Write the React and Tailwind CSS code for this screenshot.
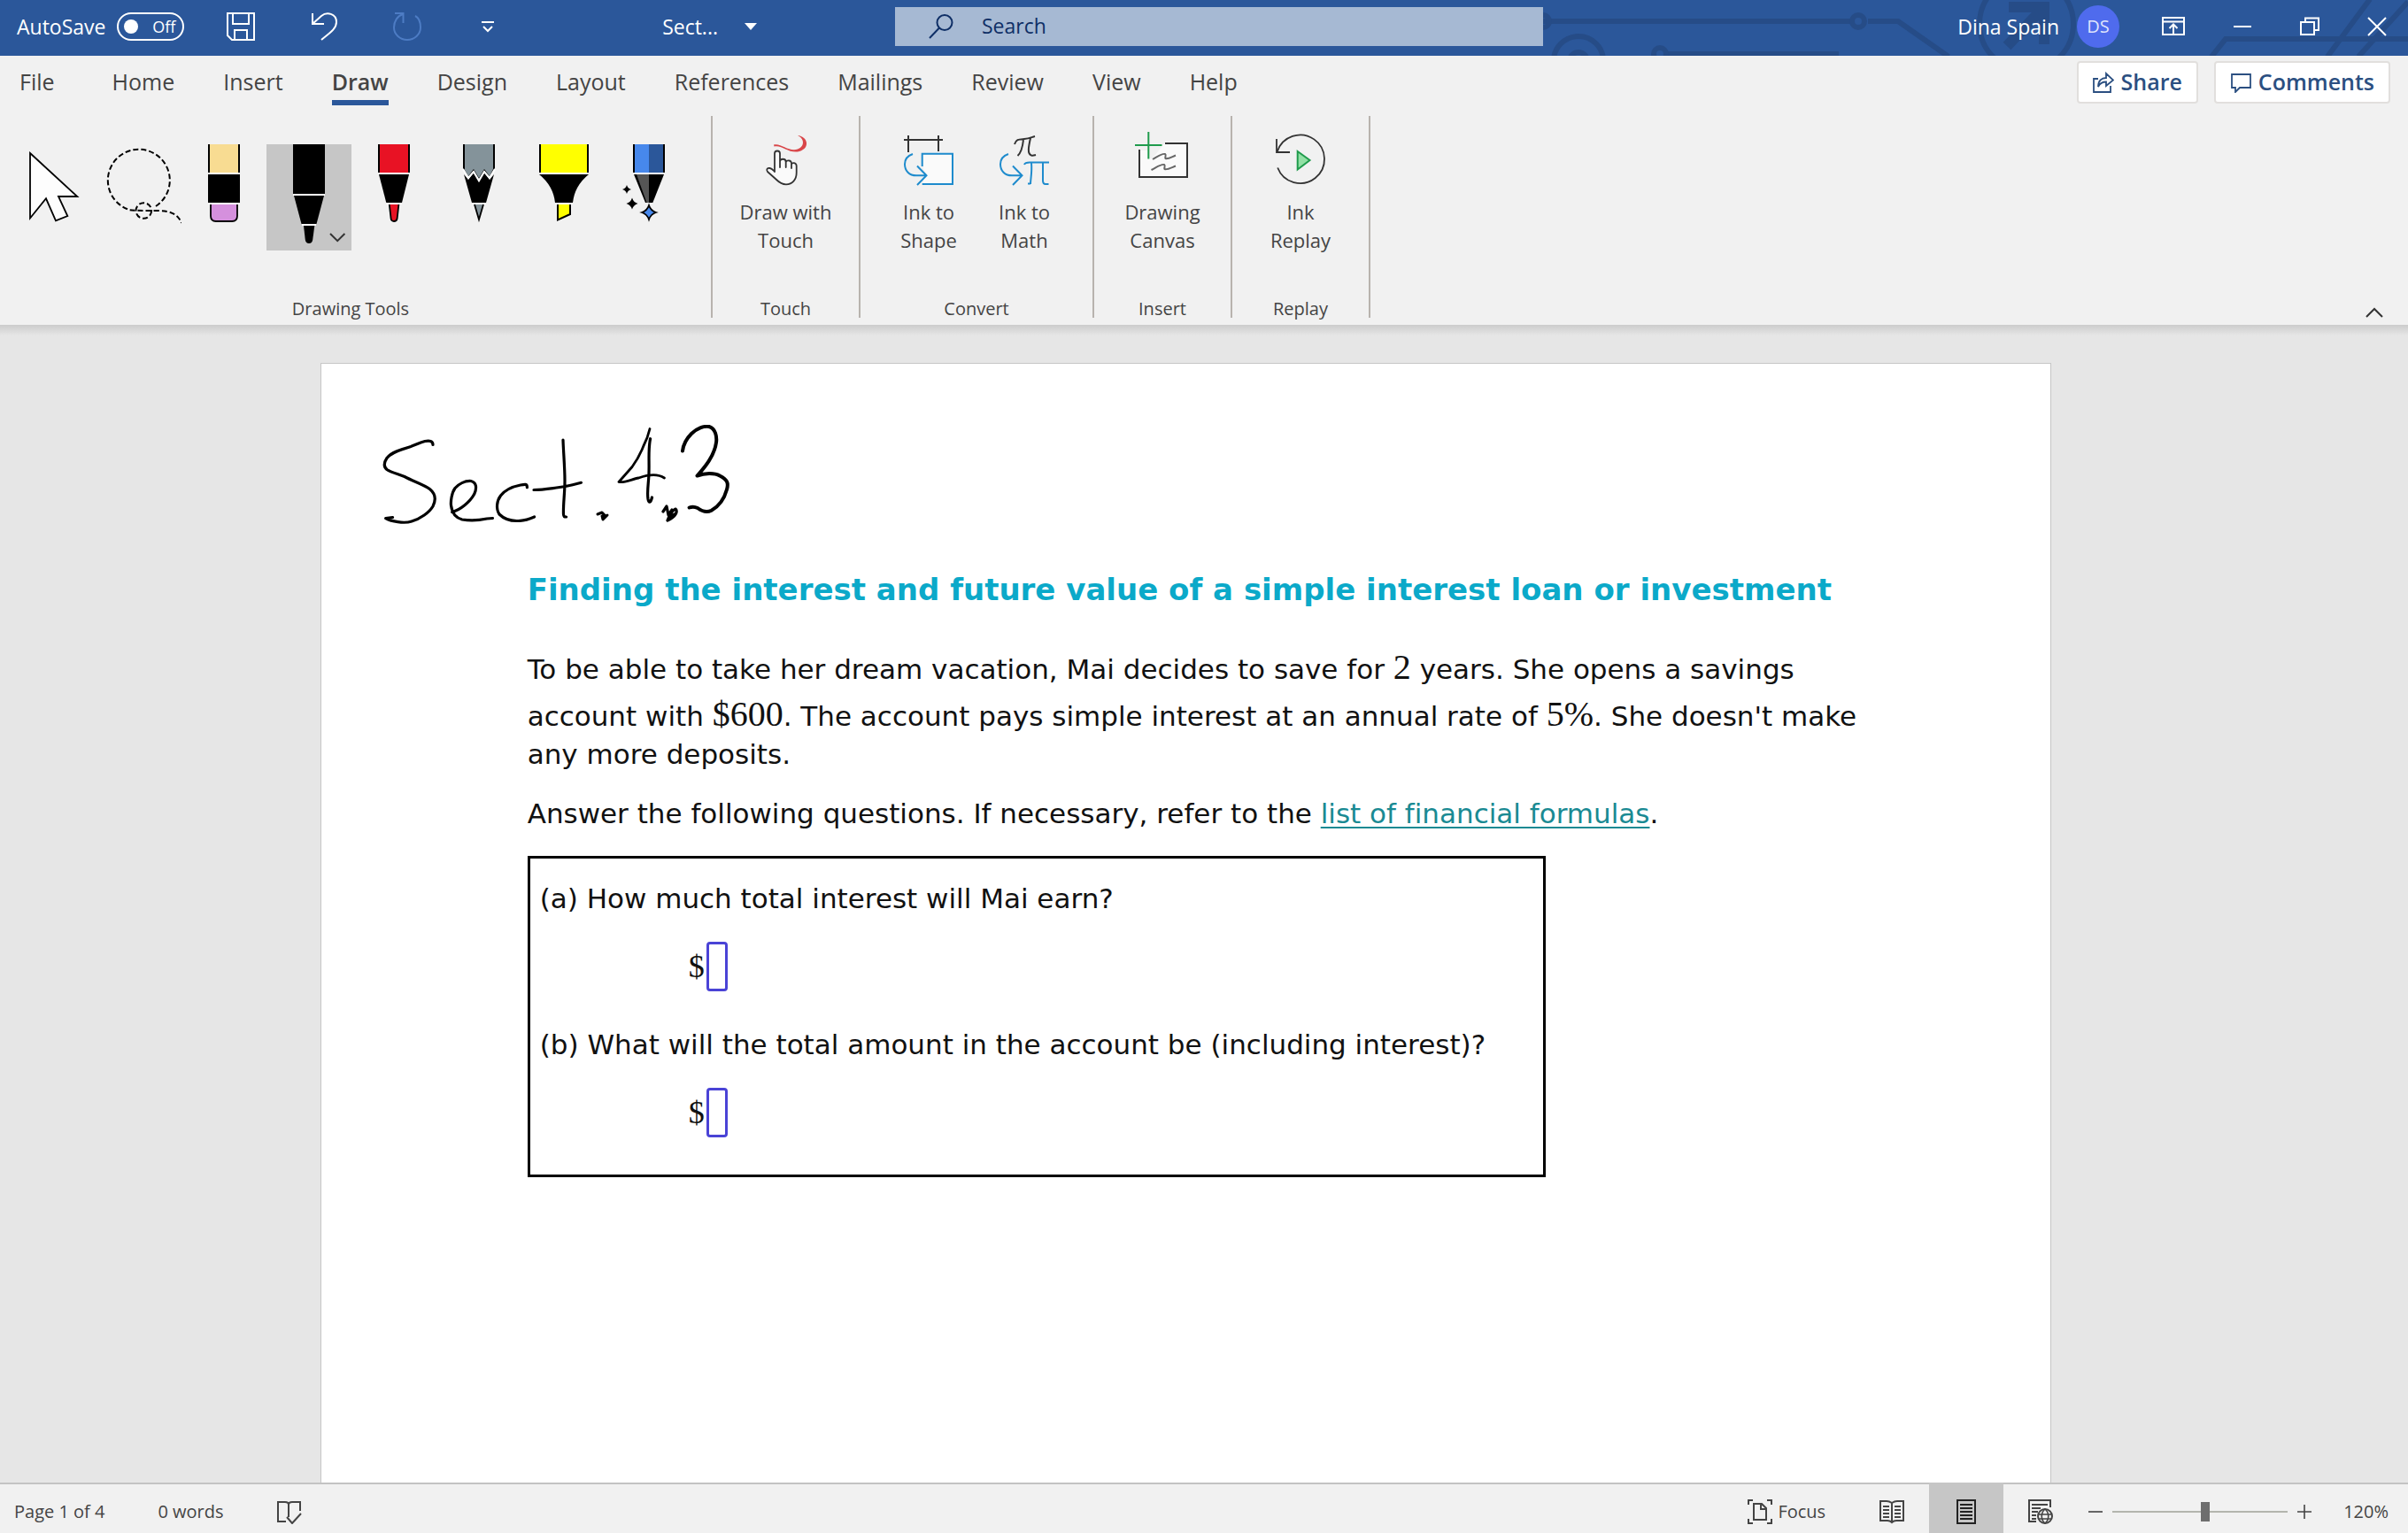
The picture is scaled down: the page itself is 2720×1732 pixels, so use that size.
import React, { useState } from 'react';

const TABS = ['File', 'Home', 'Insert', 'Draw', 'Design', 'Layout', 'References', 'Mailings', 'Review', 'View', 'Help'];

/* ---------- Drawing tools ---------- */

function CursorTool() {
  return (
    <path d="M21 10 74.3 59H53L63.3 81 50 86.3 39 61.3 21 83.5Z" fill="#fdfdfd" stroke="#000" strokeWidth="1.8" />
  );
}

function LassoTool() {
  return (
    <g fill="none" stroke="#000" strokeWidth="2" strokeDasharray="6 3">
      <path d="M67 70A35 35 0 1 0 37 74C41 75 54 75 70 75C84 75 93 80 96 89" />
      <circle cx="53.3" cy="75" r="8.8" />
    </g>
  );
}

function EraserTool() {
  return (
    <>
      <path d="M30 0H66V32H30Z" fill="#000" />
      <path d="M32 0H64V32H32Z" fill="#f8dc92" />
      <path d="M30 32H66V68H30Z" fill="#fff" />
      <path d="M30 34H66V66H30Z" fill="#000" />
      <path d="M33 68V81Q33 87 39 87H57Q63 87 63 81V68" fill="#d590dd" stroke="#000" strokeWidth="1.8" />
    </>
  );
}

function PenTool() {
  return (
    <>
      <path d="M30 0H66V56H30Z" />
      <path d="M30 56H66V58H30ZM40 90H56V92H40Z" fill="#fff" />
      <path d="M31 58H65L56.5 90H39.5Z" />
      <path d="M42 92H54.3L52.2 108Q51.5 112 48 112T43.8 108Z" />
      <path d="M72 101 80.2 109.2 88.4 101" fill="none" stroke="#333" strokeWidth="2" />
    </>
  );
}

function RedPenTool() {
  return (
    <>
      <path d="M30 0H66V32H30Z" />
      <path d="M32 0H64V32H32Z" fill="#e81224" />
      <path d="M30 32H66V34H30ZM39 66H57V68H39Z" fill="#fff" />
      <path d="M31 34H65L57 66H39.3Z" />
      <path d="M42.8 68 44.6 84Q45 87 48 87T51.6 84L53.4 68" fill="#e81224" stroke="#000" strokeWidth="1.8" />
    </>
  );
}

function PencilTool() {
  return (
    <>
      <path d="M30 0H66V27L60 38 54 30 48 40 42 30 36 38 30 27Z" />
      <path d="M32 0H64V28L60 36 54 28 48 38 42 28 36 36 32 29Z" fill="#84939a" />
      <path d="M31 34 36 40 42 32 48 42 54 32 60 40 65 34 56 66H40Z" />
      <path d="M30 28 36 38 42 31 48 41 54 31 60 38 66 28" fill="none" stroke="#fff" strokeWidth="2.2" />
      <path d="M40 66H56V68H40Z" fill="#fff" />
      <path d="M43 68 48 85 53 68" fill="#84939a" stroke="#000" strokeWidth="1.8" />
    </>
  );
}

function HighlighterTool() {
  return (
    <>
      <path d="M20 0H76V32H20Z" />
      <path d="M22 0H74V32H22Z" fill="#ff0" />
      <path d="M20 32H76V34H20ZM38 66H58V68H38Z" fill="#fff" />
      <path d="M20 34H76Q60 47 58 66H38Q36 47 20 34Z" />
      <path d="M41 68V85.5L55 79V68" fill="#ff0" stroke="#000" strokeWidth="2" />
    </>
  );
}

function ActionPenTool() {
  return (
    <>
      <path d="M30 0H66V32H30Z" />
      <path d="M32 0H48V32H32Z" fill="#4788ec" />
      <path d="M48 0H64V32H48Z" fill="#2b579a" />
      <path d="M30 32H66V34H30Z" fill="#fff" />
      <path d="M31 34H65L52.3 66H44Z" />
      <path d="M34 34H48V66H45.5Z" fill="#555" />
      <path d="M23 46Q24 50 28 51 24 52 23 56 22 52 18 51 22 50 23 46Z" />
      <path d="M29 60.5Q30.5 65.5 35.5 67 30.5 68.5 29 73.5 27.5 68.5 22.5 67 27.5 65.5 29 60.5Z" />
      <path d="M48 69Q50 75 56 77 50 79 48 85 46 79 40 77 46 75 48 69Z" fill="#4788ec" stroke="#000" strokeWidth="1.8" />
    </>
  );
}

const TOOLS = [
  { name: 'Select', Icon: CursorTool },
  { name: 'Lasso Select', Icon: LassoTool },
  { name: 'Eraser', Icon: EraserTool },
  { name: 'Black pen', Icon: PenTool },
  { name: 'Red pen', Icon: RedPenTool },
  { name: 'Pencil', Icon: PencilTool },
  { name: 'Highlighter', Icon: HighlighterTool },
  { name: 'Action pen', Icon: ActionPenTool },
];

/* ---------- Ribbon command icons, 56 x 56 ---------- */

function TouchIcon() {
  return (
    <>
      <path d="M14 10.5C22 8 31 19 41 15.5 50 12 48 3 41 0 52 1 56 14 43 18 31 21 23 10 14.5 12.5Z" fill="#d9474a" />
      <path
        d="M15 41V20.500a3 3 0 0 1 6 0V36V29.500C21 26 27.700 25.500 27.700 30V36V30.500C27.700 27.500 34 27.500 34 31.500V37V33C34 30 39.700 30.500 39.700 34.500V42C39.700 50 35 55.300 28 55.300 23 55.300 20.500 53.500 16.500 49.500L7 41C5 38.500 7 36.500 9.500 37 12 37.500 13 39 15 41Z"
        fill="#fafafa"
        stroke="#333"
        strokeWidth="1.8"
        strokeLinejoin="round"
      />
    </>
  );
}

function InkShapeIcon() {
  return (
    <>
      <path d="M22 22H54.5V54H22V46H26V44L22 38Z" fill="#fafafa" />
      <g fill="none" strokeWidth="2">
        <path d="M0 5H44M5 0V19M39 0V18" stroke="#333" />
        <path d="M20.7 35V20.7H55V55H20.7M10 21C4 23 1 27 1 32.5 1 40 6 45.3 14 45.3H25.5M15 34.5 25.5 45.3 15 56" stroke="#1e8bcd" />
      </g>
    </>
  );
}

function InkMathIcon() {
  return (
    <g fill="none" strokeWidth="2">
      <path d="M17 10C19 4 22 4.5 28 4 34 3.5 36 2 40 1M27 5C26 14 24 20 20.5 23M35 3C33 12 31 21 36 22.5 38 23 39 22.5 41 22" stroke="#333" />
      <path d="M10 21C4 23 1 27 1 32.5 1 40 6 45.3 14 45.3H25.5M15 34.5 25.5 45.3 15 56" stroke="#1e8bcd" />
      <path d="M28 33C29 30.5 31 30.5 34 30.5H56M36 31C37 42 35 49 35 55M35 54.5H32M49 31V51Q49 55 52 55H55.5" stroke="#1e8bcd" />
    </g>
  );
}

function CanvasIcon() {
  return (
    <>
      <path d="M2 17H12V26H17L30 9H56V47H2Z" fill="#fafafa" />
      <g fill="none" strokeWidth="2">
        <path d="M31 9H56V47H2V16" stroke="#333" />
        <path d="M12.3-4V26.5M-3 11H27.5" stroke="#1f9b4c" />
        <path d="M17 27C24 23 28 20 31 21 33 22 30 26 32 26.3 36 26.5 39 24 43 22.5M15.5 39C23 35 27 32 30 33 32 34 29 38 31 38.3 35 38.5 39 36 43 34.5" stroke="#666" />
      </g>
    </>
  );
}

function ReplayIcon() {
  return (
    <>
      <path d="M1 4V19H16M1.7 18.5A27.3 27.3 0 1 1 2.2 36.5" fill="none" stroke="#333" strokeWidth="1.8" />
      <path d="M24.7 18 38.5 28 24.7 38.5Z" fill="#92e0a5" stroke="#1f9b4c" strokeWidth="2" />
    </>
  );
}

function RibbonCommand({ Icon, lines }) {
  return (
    <button type="button" className="flex w-27 flex-col items-center gap-3.5 text-[22px] leading-8">
      <svg viewBox="0 0 56 56" className="h-14 w-14 overflow-visible" aria-hidden="true">
        <Icon />
      </svg>
      <span className="whitespace-nowrap">
        {lines[0]}
        <br />
        {lines[1]}
      </span>
    </button>
  );
}

function RibbonGroup({ label, className, children }) {
  return (
    <section className={`flex flex-col items-center justify-between border-r-2 border-[#b8b3ae] ${className}`}>
      <div className="flex justify-center pt-[22px]">{children}</div>
      <h2 className="text-xl leading-5">{label}</h2>
    </section>
  );
}

/* ---------- Window title bar ---------- */

function TitleBar() {
  const [autoSave, setAutoSave] = useState(false);

  return (
    <header className="grid h-[63px] shrink-0 grid-cols-[1011fr_732fr_977fr] items-center bg-[#2b579a] text-[23px] text-white">
      <div className="flex items-center pr-[156px] pb-[3px] pl-[19px]">
        <label className="flex items-center gap-[13px]">
          AutoSave
          <input type="checkbox" className="sr-only" checked={autoSave} onChange={() => setAutoSave(!autoSave)} />
          <span className="flex h-8 w-[76px] items-center justify-between rounded-full border-2 pr-2 pl-1.5 text-lg">
            <span className="h-4 w-4 rounded-full bg-white" />
            {autoSave ? 'On' : 'Off'}
          </span>
        </label>
        <button type="button" aria-label="Save" className="ml-12">
          <svg viewBox="0 0 32 32" className="h-8 w-8" fill="none" stroke="currentColor" strokeWidth="2">
            <path d="M1 1H31V31H6L1 26ZM7 1V13H25V1M9 31V20H23V31" />
          </svg>
        </button>
        <button type="button" aria-label="Undo" className="ml-16">
          <svg viewBox="0 0 32 32" className="h-8 w-8" fill="none" stroke="currentColor" strokeWidth="2">
            <path d="M1 1V13H14M1 13 11 4C17-1 28 1 28 11 28 19 19 24 11 31" />
          </svg>
        </button>
        <button type="button" aria-label="Redo" className="ml-15 text-[#4d7cc4]">
          <svg viewBox="0 0 32 32" className="h-8 w-8" fill="none" stroke="currentColor" strokeWidth="2">
            <path d="M2 1H11.5V12M11 2C5 4 1 10 1 17 1 25 8 31 16 31S31 25 31 17C31 11 29 6 25 4" />
          </svg>
        </button>
        <button type="button" aria-label="Customize Quick Access Toolbar" className="ml-[68px]">
          <svg viewBox="0 0 14 14" className="h-3.5 w-3.5" fill="none" stroke="currentColor" strokeWidth="2">
            <path d="M0 2H14M2 7 7 12 12 7" />
          </svg>
        </button>
        <button type="button" className="ml-auto flex items-center gap-[30px]">
          Sect...
          <svg viewBox="0 0 14 8" className="h-2 w-3.5" fill="currentColor">
            <path d="M0 0H14L7 8Z" />
          </svg>
        </button>
      </div>

      <label className="mb-1 flex h-11 items-center gap-8 bg-[#a6b9d3] px-[38px] text-[#0f2f66]">
        <svg viewBox="0 0 28 28" className="h-7 w-7" fill="none" stroke="currentColor" strokeWidth="2">
          <circle cx="18" cy="9.5" r="8.5" />
          <path d="M12 15.5 1 27" />
        </svg>
        <input type="search" aria-label="Search" placeholder="Search" className="min-w-0 flex-1 bg-transparent outline-none placeholder:text-[#0f2f66]" />
      </label>

      <div className="relative flex h-full items-center justify-end pr-6 pb-[3px]">
        <svg viewBox="0 0 977 63" className="absolute inset-0 h-full w-full" fill="none" stroke="#264c87" strokeWidth="6" aria-hidden="true">
          <path d="M0 24H348M367 24H401L458 64M755 64 771 44H977M886 64 934-1M921 64 977 2M140 61H334" />
          <circle cx="356" cy="24" r="7" />
          <circle cx="0" cy="24" r="7" />
          <circle cx="40" cy="69" r="28" />
          <circle cx="40" cy="69" r="10" />
          <circle cx="132" cy="61" r="7" />
          <circle cx="546" cy="27" r="53" />
          <path d="M526 8H566V50M564 10 524 52" strokeWidth="12" />
        </svg>
        <div className="relative flex items-center">
          <span>Dina Spain</span>
          <span className="ml-5 flex h-12 w-12 items-center justify-center rounded-full bg-[#4f6bed] text-xl text-[#dfe4fc]">DS</span>
          <button type="button" aria-label="Ribbon Display Options" className="ml-12">
            <svg viewBox="0 0 26 22" className="h-[22px] w-[26px]" fill="none" stroke="currentColor" strokeWidth="2">
              <path d="M1 1H25V20H1ZM1 5.5H25M13 19V9M8.5 13 13 8.5 17.5 13" />
            </svg>
          </button>
          <button type="button" aria-label="Minimize" className="ml-[54px]">
            <svg viewBox="0 0 22 22" className="h-[22px] w-[22px]" stroke="currentColor" strokeWidth="2">
              <path d="M1 11H21" />
            </svg>
          </button>
          <button type="button" aria-label="Restore Down" className="ml-[54px]">
            <svg viewBox="0 0 22 22" className="h-[22px] w-[22px]" fill="none" stroke="currentColor" strokeWidth="2">
              <path d="M1 6H16V20H1ZM6 6V1.5H21V15H16" />
            </svg>
          </button>
          <button type="button" aria-label="Close" className="ml-[54px]">
            <svg viewBox="0 0 22 22" className="h-[22px] w-[22px]" stroke="currentColor" strokeWidth="2">
              <path d="M1 1 21 21M21 1 1 21" />
            </svg>
          </button>
        </div>
      </div>
    </header>
  );
}

/* ---------- Ribbon ---------- */

function Ribbon() {
  const [tab, setTab] = useState('Draw');
  const [tool, setTool] = useState('Black pen');

  return (
    <div className="shrink-0 bg-[#f1f1f1] text-[#444]">
      <div className="flex items-center justify-between pr-5 pl-[22px]">
        <nav className="flex gap-[55px] pt-1 pb-1 text-[25px]">
          {TABS.map((t) => (
            <button
              key={t}
              type="button"
              onClick={() => setTab(t)}
              className={`border-b-6 pt-1 leading-[42px] first:mr-2.5 ${
                t === tab ? 'border-[#2b579a] font-semibold' : 'border-transparent'
              }`}
            >
              {t}
            </button>
          ))}
        </nav>
        <div className="flex gap-[18px] text-[25px] font-semibold text-[#2b4f81]">
          <button type="button" className="flex h-12 items-center gap-2 rounded border-2 border-[#e1dfdd] bg-white px-4">
            <svg viewBox="0 0 24 24" className="h-6 w-6" fill="none" stroke="currentColor" strokeWidth="1.8">
              <path d="M6 8H1V23H20V16M6 17C6 10 10 7 15 7V2L23 9.5 15 16V11.5C11 11.5 8 13 6 17Z" />
            </svg>
            Share
          </button>
          <button type="button" className="flex h-12 items-center gap-2 rounded border-2 border-[#e1dfdd] bg-white px-4">
            <svg viewBox="0 0 24 24" className="h-6 w-6" fill="none" stroke="currentColor" strokeWidth="1.8">
              <path d="M2 3H23V18H11L6 23V18H2Z" />
            </svg>
            Comments
          </button>
        </div>
      </div>

      <div className="flex items-stretch pt-2 pb-2">
        <section className="flex h-[228px] w-[805px] flex-col justify-between border-r-2 border-[#b8b3ae] pl-[13px]">
          <div className="flex pt-8">
            {TOOLS.map(({ name, Icon }) => (
              <button
                key={name}
                type="button"
                aria-label={name}
                aria-pressed={name === tool}
                onClick={() => setTool(name)}
                className={`h-30 w-24 ${name === tool ? 'bg-[#c6c6c6]' : ''}`}
              >
                <svg viewBox="0 0 96 120" className="h-30 w-24">
                  <Icon />
                </svg>
              </button>
            ))}
          </div>
          <h2 className="pr-6 text-center text-xl leading-5">Drawing Tools</h2>
        </section>
        <RibbonGroup label="Touch" className="w-[167px]">
          <RibbonCommand Icon={TouchIcon} lines={['Draw with', 'Touch']} />
        </RibbonGroup>
        <RibbonGroup label="Convert" className="w-[264px]">
          <RibbonCommand Icon={InkShapeIcon} lines={['Ink to', 'Shape']} />
          <RibbonCommand Icon={InkMathIcon} lines={['Ink to', 'Math']} />
        </RibbonGroup>
        <RibbonGroup label="Insert" className="w-[156px]">
          <RibbonCommand Icon={CanvasIcon} lines={['Drawing', 'Canvas']} />
        </RibbonGroup>
        <RibbonGroup label="Replay" className="w-[156px]">
          <RibbonCommand Icon={ReplayIcon} lines={['Ink', 'Replay']} />
        </RibbonGroup>
        <button type="button" aria-label="Collapse the Ribbon" className="mr-7 ml-auto self-end">
          <svg viewBox="0 0 20 12" className="h-3 w-5" fill="none" stroke="#333" strokeWidth="2">
            <path d="M1 11 10 2 19 11" />
          </svg>
        </button>
      </div>
      <div className="h-3 bg-linear-to-b from-[#cccccc] to-[#e6e6e6]" />
    </div>
  );
}

/* ---------- Document ---------- */

// Handwritten note at the top of the page, one path per pen stroke.
function InkNote() {
  return (
    <svg
      viewBox="0 0 400 130"
      className="ml-[67px] h-[130px] w-[400px]"
      fill="none"
      stroke="#000"
      strokeWidth="3.2"
      strokeLinecap="round"
      strokeLinejoin="round"
      role="img"
      aria-label="Handwritten note"
    >
      <path d="M59 22.5C59 18 55 17.500 50 18.500 44 20 40 22.500 34 24.500 24 27.500 12 31 7 37.500 4 42 3 47 7 50.500 12 54 20 55.500 27 58.500 37 64 48 67 55.700 72.700 62 78 62.500 85 59 92 55 99 45 106 35 109 26 112 12 109 5.700 105.500L13.500 104.500" />
      <path d="M80.7 98.5C90 96 101 87 105.700 78.300 109 71 108 65 102 63.500 95 63 88 67 84 71.500 80 77 79 87 79.500 91 80.500 99 84 105 92 107 102 108.500 113 107.500 120 106L126.500 105.500" />
      <path d="M165.4 70.700C165.500 66.500 163 67 158 68 148 70 140 74 135.500 80 131 86 130 95 134 101 141 108 150 109 157.500 108.300 164 108 169 106 173.600 104" />
      <path d="M206 17C206.500 32 208 48 208 63 208 78 206 90 206.500 101 206.700 104 207.500 104 209.600 104M173 73.500C182 73.500 191 72 198.600 71 209 70 218 67.500 226.400 65.300" />
      <path d="M245 101 250 99 253 102 250 103 251 107 256 102" strokeWidth="3" />
      <path d="M304 4.500C302 13 300 18 296.800 24 293 34 288 42 284 47.500L269 64.500C276 66 284 61 291.400 60 300 57 312 54.500 320.400 60" strokeWidth="2.8" />
      <path d="M304.600 15.700C302 28 303.500 40 303 53.500 303 64 300.500 75 302 84 303 89 305 88 306.500 82" />
      <path d="M319 98 323 92 325 102 329 96M324 108C326 102 330 96 333 95 336 98 333 104 324 108M328 103 332 101" strokeWidth="3.2" />
      <path d="M341 29.500C342 21 346 15 351 10 357 4 365 1 371 2 378 4 380 13 379 20 377 35 366 48 357.500 57.500 366 54.500 377 54 383 57.500 392 62 393 66 391 73 388 84 382 92 373.600 96.700 367 100 362 97 358 94 354 92 351 92.500 348.600 93.500" strokeWidth="4" />
    </svg>
  );
}

function Question({ id, children }) {
  return (
    <div>
      <label htmlFor={id} className="block leading-10">
        {children}
      </label>
      <div className="mt-[29px] flex items-center pl-42 font-['Liberation_Serif',serif] text-4xl leading-10">
        $
        <input id={id} type="text" className="ml-0.5 h-14 w-6 rounded-sm border-3 border-[#4a43d6] bg-white" />
      </div>
    </div>
  );
}

function Num({ children }) {
  return <span className="font-['Liberation_Serif',serif] text-[40px] leading-none">{children}</span>;
}

function Page() {
  return (
    <article className="w-[73%] border border-b-0 border-[#c6c6c6] bg-white pt-[69px] font-['DejaVu_Sans',sans-serif] text-[#111] [font-variant-ligatures:none]">
      <InkNote />
      <div className="pr-[160px] pl-[233px] text-[31px]">
        <h1 className="mt-9 text-[34px] leading-10 font-bold whitespace-nowrap text-[#0ba9c9]">
          Finding the interest and future value of a simple interest loan or investment
        </h1>
        <p className="mt-11 leading-[53px] whitespace-nowrap">
          To be able to take her dream vacation, Mai decides to save for <Num>2</Num> years. She opens a savings
          <br />
          account with <Num>$600</Num>. The account pays simple interest at an annual rate of <Num>5%</Num>. She doesn't make
        </p>
        <p className="leading-8 whitespace-nowrap">any more deposits.</p>
        <p className="mt-[29px] leading-11 whitespace-nowrap">
          Answer the following questions. If necessary, refer to the{' '}
          <a href="#formulas" className="text-[#1a8a93] underline decoration-2 underline-offset-4">
            list of financial formulas
          </a>
          .
        </p>
        <div className="mt-[26px] flex w-[1150px] flex-col gap-10 border-3 border-black px-[11px] pt-[25px] pb-[42px]">
          <Question id="interest">(a) How much total interest will Mai earn?</Question>
          <Question id="total">(b) What will the total amount in the account be (including interest)?</Question>
        </div>
      </div>
    </article>
  );
}

/* ---------- Status bar ---------- */

function StatusBar() {
  const [zoom, setZoom] = useState(53);

  return (
    <footer className="flex h-[57px] shrink-0 items-center border-t-2 border-[#c3c3c3] bg-[#f1f1f1] pt-1.5 pr-[22px] pl-4 text-xl text-[#444]">
      <span>Page 1 of 4</span>
      <span className="ml-[60px]">0 words</span>
      <button type="button" aria-label="Proofing" className="ml-[60px]">
        <svg viewBox="0 0 28 28" className="h-7 w-7" fill="none" stroke="currentColor" strokeWidth="2">
          <path d="M10 25H1V3H9Q13 3 13 6 13 3 17 3H26V13M13 5V20M11 20 17 27 27 16" />
        </svg>
      </button>

      <button type="button" className="ml-auto flex items-center gap-1.5">
        <svg viewBox="0 0 28 28" className="h-7 w-7" fill="none" stroke="currentColor" strokeWidth="2">
          <path d="M6 1H1V6M22 1H27V6M1 22V27H6M27 22V27H22M7 5H16L21 10V23H7ZM15 5V11H21" />
        </svg>
        Focus
      </button>
      <button type="button" aria-label="Read Mode" className="ml-[61px]">
        <svg viewBox="0 0 28 28" className="h-7 w-7" fill="none" stroke="currentColor" strokeWidth="2">
          <path d="M14 4Q11 2 8 2H1V24H9Q12 24 14 26 16 24 19 24H27V2H20Q17 2 14 4V26M4 8H11M4 12H11M4 16H11M4 20H11M17 8H24M17 12H24M17 16H24M17 20H24" />
        </svg>
      </button>
      <button type="button" aria-label="Print Layout" className="-mt-2 ml-7 flex h-[57px] w-[84px] items-center justify-center bg-[#c6c6c6] pt-2 text-[#222]">
        <svg viewBox="0 0 22 28" className="h-7 w-[22px]" fill="none" stroke="currentColor" strokeWidth="2">
          <path d="M1 1H21V27H1ZM4 6H18M4 10H18M4 14H18M4 18H18M4 22H18" />
        </svg>
      </button>
      <button type="button" aria-label="Web Layout" className="ml-7">
        <svg viewBox="0 0 28 28" className="h-7 w-7" fill="none" stroke="currentColor" strokeWidth="2">
          <path d="M9 25H1V1H25V9M4 6H22M4 10H14M4 14H11M4 18H9M4 22H9" />
          <circle cx="19" cy="19" r="8" />
          <path d="M11 17H27M12 22H26M19 11C14 15 14 23 19 27 24 23 24 15 19 11" strokeWidth="1.6" />
        </svg>
      </button>
      <button type="button" aria-label="Zoom Out" className="ml-10">
        <svg viewBox="0 0 16 16" className="h-4 w-4" stroke="currentColor" strokeWidth="1.6">
          <path d="M0 8H16" />
        </svg>
      </button>
      <input
        type="range"
        aria-label="Zoom"
        min="0"
        max="100"
        value={zoom}
        onChange={(e) => setZoom(Number(e.target.value))}
        className="mx-[11px] h-[22px] w-[198px] appearance-none bg-transparent [&::-webkit-slider-runnable-track]:h-0.5 [&::-webkit-slider-runnable-track]:bg-[#b3b5ae] [&::-webkit-slider-thumb]:-mt-2.5 [&::-webkit-slider-thumb]:h-[22px] [&::-webkit-slider-thumb]:w-2.5 [&::-webkit-slider-thumb]:appearance-none [&::-webkit-slider-thumb]:bg-[#6e6e6e]"
      />
      <button type="button" aria-label="Zoom In">
        <svg viewBox="0 0 16 16" className="h-4 w-4" stroke="currentColor" strokeWidth="1.6">
          <path d="M0 8H16M8 0V16" />
        </svg>
      </button>
      <button type="button" className="ml-9">120%</button>
    </footer>
  );
}

export default function App() {
  return (
    <div className="flex h-screen flex-col overflow-hidden bg-[#e6e6e6] font-['Open_Sans',sans-serif]">
      <TitleBar />
      <Ribbon />
      <main className="flex min-h-0 flex-1 justify-center overflow-hidden pt-[31px] pr-[41px]">
        <Page />
      </main>
      <StatusBar />
    </div>
  );
}
